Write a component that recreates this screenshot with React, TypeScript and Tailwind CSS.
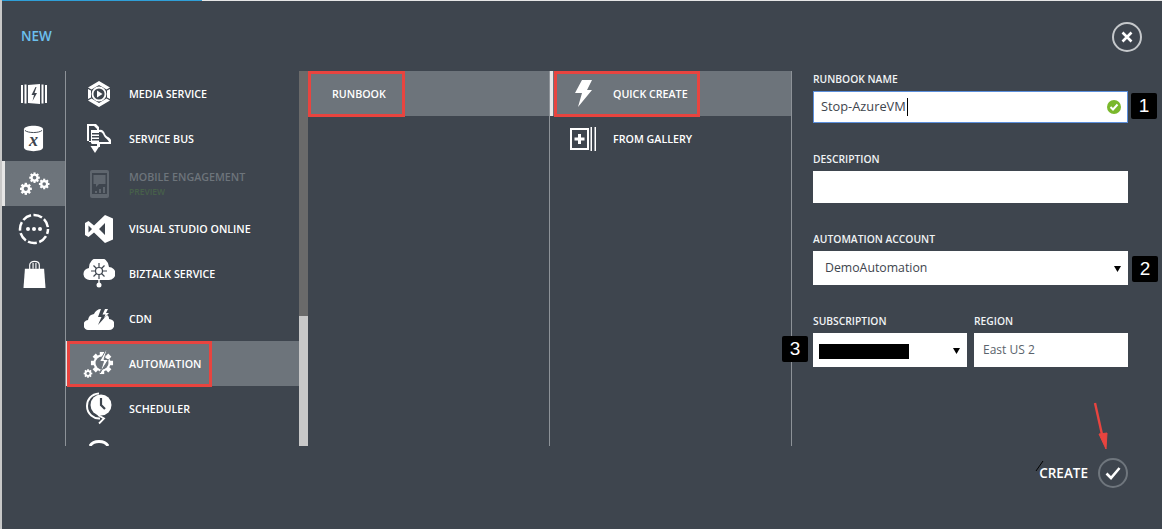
import type { ReactNode } from 'react'

const font = { fontFamily: '"Open Sans", "Liberation Sans", sans-serif' }

function Gear({ cx, cy, r, bg = '#3e454e' }: { cx: number; cy: number; r: number; bg?: string }) {
  const teeth = 8
  const points = Array.from({ length: teeth }, (_, i) => (i * 360) / teeth)
  return (
    <g fill="white">
      {points.map((a) => (
        <rect key={a} x={cx - r * 0.26} y={cy - r * 1.3} width={r * 0.52} height={r * 0.6} transform={`rotate(${a} ${cx} ${cy})`} />
      ))}
      <circle cx={cx} cy={cy} r={r} />
      <circle cx={cx} cy={cy} r={r * 0.45} fill={bg} />
    </g>
  )
}

const SitesIcon = () => (
  <svg width="26" height="20" viewBox="0 0 26 20" fill="white">
    <path d="M0 1h2v18H0zM3.500 .5h2v19h-2zM20.500 .5h2v19h-2zM24 1h2v18h-2zM7 1l12-1v20L7 19z" />
    <path d="M14.500 3l-4 8h2.500l-1.500 6 4.500-8h-2.500l2-6z" fill="#3e454e" />
  </svg>
)

const DataIcon = () => (
  <svg width="21" height="27" viewBox="0 0 22 27">
    <path d="M1 4c0-5 20-5 20 0v19c0 5-20 5-20 0z" fill="white" />
    <path d="M2 5c3 3 15 3 18 0" fill="none" stroke="#3e454e" strokeWidth="1" />
    <text x="11" y="21" textAnchor="middle" fontSize="19" fontWeight="700" fontStyle="italic" fontFamily="Liberation Serif, serif" fill="#3e454e">x</text>
  </svg>
)

const GearsIcon = () => (
  <svg width="30" height="25" viewBox="0 0 31 25" className="ml-[3px]">
    <Gear cx={6} cy={18} r={4.800} bg="#6d747b" />
    <Gear cx={15} cy={6.500} r={4.200} bg="#6d747b" />
    <Gear cx={25} cy={13} r={4.200} bg="#6d747b" />
  </svg>
)

const MoreIcon = () => (
  <svg width="32" height="32" viewBox="0 0 32 32" fill="white">
    <circle cx="16" cy="16" r="14" fill="none" stroke="white" strokeWidth="2.500" strokeDasharray="9 2.500" strokeDashoffset="4" />
    <circle cx="10" cy="16" r="2" />
    <circle cx="16" cy="16" r="2" />
    <circle cx="22" cy="16" r="2" />
  </svg>
)

const BagIcon = () => (
  <svg width="23" height="29" viewBox="0 0 24 30" className="mt-[1px] ml-[2px]">
    <path d="M2 9h20l1.500 20H.5z" fill="white" />
    <path d="M7 10V5c0-5 10-5 10 0v5M10.500 9V3M13.500 9V3" fill="none" stroke="white" strokeWidth="1.200" />
  </svg>
)

const MediaIcon = () => (
  <svg width="24" height="26" viewBox="0 0 24 26">
    <path d="M12 0l11 6.500-3.500 2L12 4 4.500 8.500 1 6.500zM1 19.500l3.500-2L12 22l7.500-4.500 3.500 2L12 26z" fill="white" />
    <path d="M1 8l3 1.500v7l-3 1.500zM23 8l-3 1.500v7l3 1.500z" fill="white" />
    <circle cx="12" cy="13" r="6.500" fill="none" stroke="white" strokeWidth="1.800" />
    <path d="M10 9.500l5.500 3.500-5.500 3.500z" fill="white" />
  </svg>
)

const BusIcon = () => (
  <svg width="24" height="29" viewBox="0 0 24 29">
    <path d="M0 0h9l3 3v3c3-1 5 1 6 4 1 3 5 3 6 6v4H13v3h-3v-3H4.500V18H2V17H0z" fill="white" />
    <path d="M2 2h5l3 3v12H2z" fill="#3e454e" />
    <path d="M12 8c3-.5 4 1.500 5 4 1 2.500 4 3 5 6H12z" fill="#3e454e" />
    <path d="M4 6v13h8V6z" fill="white" />
    <path d="M5 9h7v1.500H5zM5 12h7v1.500H5zM5 15h7v1.500H5z" fill="#3e454e" />
    <path d="M3.500 22h9L8 29z" fill="white" />
  </svg>
)

const PhoneIcon = () => (
  <svg width="19" height="28" viewBox="0 0 19 28" fill="#5f666e">
    <path d="M2 0h15a2 2 0 012 2v24a2 2 0 01-2 2H2a2 2 0 01-2-2V2a2 2 0 012-2z" />
    <path d="M2 3h15v21H2z" fill="#3e454e" />
    <path d="M3.500 5h12v9H9l-3 3v-3H3.500zM5 21h2v2H5zM9 19h2v4H9zM13 17h2v6h-2z" />
  </svg>
)

const VsIcon = () => (
  <svg width="28" height="28" viewBox="0 0 28 28" fill="white">
    <path d="M20 0l8 3.500v21L20 28 9 17.500 3.500 22 0 20V8l3.500-2L9 10.500zM20 8l-6 6 6 6zM3.500 10.500v7L7 14z" fillRule="evenodd" />
  </svg>
)

const BizTalkIcon = () => (
  <svg width="32" height="29" viewBox="0 0 32 29">
    <path d="M7 21a6 6 0 01-1-12 10 10 0 0120-1 6.500 6.500 0 010 13z" fill="white" />
    <g stroke="#3e454e" strokeWidth="1.200" fill="none">
      <circle cx="16" cy="12" r="3.500" />
      <path d="M16 4v4.500M16 15.500V20M8 12h4.500M19.500 12H24M10.500 6.500l3 3M21.500 6.500l-3 3M10.500 17.500l3-3M21.500 17.500l-3-3" />
    </g>
    <path d="M15.300 20h1.400v5h-1.400z" fill="white" />
    <circle cx="16" cy="26" r="2.500" fill="white" />
  </svg>
)

const CdnIcon = () => (
  <svg width="30" height="22" viewBox="0 0 30 22">
    <path d="M5 22a5 5 0 01-1-10 7 7 0 016-6c1-3 4-5 7-5l-3 8h3.500L14 17l9-10c2 1 2 3 2 4a5.500 5.500 0 010 11z" fill="white" />
    <path d="M21 1l-2.500 5.500h3L20 10l5-5h-3l2-4z" fill="white" />
  </svg>
)

const AutomationIcon = () => (
  <svg width="32" height="30" viewBox="0 0 32 30">
    <Gear cx={19} cy={14} r={8.500} bg="#6d747b" />
    <circle cx="19" cy="14" r="6.500" fill="#6d747b" />
    <path d="M23 1l-6.500 11.500h4L17 24l8.500-13.500h-4.500l3-9.500z" fill="white" stroke="#6d747b" strokeWidth="1" />
    <Gear cx={5} cy={24.500} r={3.300} bg="#6d747b" />
  </svg>
)

const SchedulerIcon = () => (
  <svg width="26" height="33" viewBox="0 0 26 33">
    <circle cx="15" cy="13" r="10.500" fill="white" />
    <path d="M15 6v7l4 4" fill="none" stroke="#3e454e" strokeWidth="2.200" />
    <path d="M13 1.500C5 2 1 8 1 14c0 8 7 13 13 12.500" fill="none" stroke="white" strokeWidth="2" />
    <path d="M12 23l6 3.500-5 5" fill="none" stroke="white" strokeWidth="1.800" />
  </svg>
)

const NextIcon = () => (
  <svg width="20" height="6" viewBox="0 0 20 6" className="mt-[9px]">
    <path d="M1 6c3-6 15-6 18 0" fill="none" stroke="white" strokeWidth="3" />
  </svg>
)

const BoltIcon = () => (
  <svg width="17" height="27" viewBox="0 0 17 27" fill="white">
    <path d="M7 0h10l-5 10h5L3 27l4-14H0z" />
  </svg>
)

const GalleryIcon = () => (
  <svg width="27" height="24" viewBox="0 0 27 24" fill="white">
    <path d="M0 1h19v22H0zM2 3v18h15V3z" fillRule="evenodd" />
    <path d="M8 7h3v3.500h3.500v3H11V17H8v-3.500H4.500v-3H8z" />
    <path d="M20.500 0h1.500v24h-1.500zM24.500 0H26v24h-1.500z" />
  </svg>
)

function NavItem({ selected, children }: { selected?: boolean; children: ReactNode }) {
  return (
    <div className={`flex h-[45px] items-center justify-center ${selected ? 'border-l-[3px] border-[#e6e6e6] bg-[#6d747b] pr-[3px]' : ''}`}>
      {children}
    </div>
  )
}

function ListRow({ icon, label, sub, muted, selected, boxClass, barClass }: { icon?: ReactNode; label: string; sub?: string; muted?: boolean; selected?: boolean; boxClass?: string; barClass?: string }) {
  return (
    <div className={`relative flex h-[45px] shrink-0 items-center ${selected ? 'bg-[#6d747b]' : ''}`}>
      {icon && <div className="flex w-[63px] shrink-0 justify-center pl-[3px]">{icon}</div>}
      <div className={icon ? '' : 'pl-[24px]'}>
        <div className={`text-[10.700px] leading-[14px] font-semibold whitespace-nowrap ${muted ? 'text-[#6d747b]' : 'text-white'}`}>{label}</div>
        {sub && <div className="mt-[3px] text-[8.500px] leading-[10px] font-semibold text-[#47604a]">{sub}</div>}
      </div>
      {barClass && <div className={`absolute top-0 left-0 h-[45px] w-[3px] ${barClass}`} />}
      {boxClass && <div className={`pointer-events-none absolute border-[3px] border-[#e8443f] ${boxClass}`} />}
    </div>
  )
}

function Label({ children }: { children: ReactNode }) {
  return <div className="mb-[5px] h-[14px] text-[10.300px] leading-[14px] font-semibold whitespace-nowrap text-[#f0f3f5]">{children}</div>
}

function Badge({ children, className }: { children: ReactNode; className: string }) {
  return (
    <div className={`absolute flex h-[26px] w-[26px] items-center justify-center rounded-[2px] bg-black text-[19px] text-white ${className}`} style={{ fontFamily: '"Liberation Sans", sans-serif' }}>
      {children}
    </div>
  )
}

const Caret = () => (
  <svg width="7" height="7" viewBox="0 0 7 7">
    <path d="M0 1h7L3.500 7z" fill="black" />
  </svg>
)

export default function App() {
  return (
    <div className="flex h-[529px] w-[1162px] flex-col overflow-hidden border-l-2 border-[#c8c8c8] bg-[#3e454e]" style={font}>
      <div className="flex h-px shrink-0 bg-[#e6e6e6]">
        <div className="w-[200px] bg-[#2f9fd8]" />
      </div>

      <div className="flex h-[70px] shrink-0 items-start justify-between pr-[20px] pl-[19px]">
        <div className="mt-[25px] text-[13.500px] leading-[20px] font-semibold text-[#6cc0ee]">NEW</div>
        <div className="mt-[21px] flex h-[30px] w-[30px] items-center justify-center rounded-full border-2 border-[#c5c8cb]">
          <svg width="12" height="12" viewBox="0 0 12 12">
            <path d="M1.500 1.500l9 9M10.500 1.500l-9 9" stroke="white" strokeWidth="2.600" />
          </svg>
        </div>
      </div>

      <div className="flex h-[375px] shrink-0">
        <div className="w-[63px] shrink-0">
          <NavItem><SitesIcon /></NavItem>
          <NavItem><DataIcon /></NavItem>
          <NavItem selected><GearsIcon /></NavItem>
          <NavItem><MoreIcon /></NavItem>
          <NavItem><BagIcon /></NavItem>
        </div>

        <div className="flex w-[243px] shrink-0 border-l border-[#8d9298]">
          <div className="flex w-[233px] flex-col overflow-hidden">
            <ListRow icon={<MediaIcon />} label="MEDIA SERVICE" />
            <ListRow icon={<BusIcon />} label="SERVICE BUS" />
            <ListRow icon={<PhoneIcon />} label="MOBILE ENGAGEMENT" sub="PREVIEW" muted />
            <ListRow icon={<VsIcon />} label="VISUAL STUDIO ONLINE" />
            <ListRow icon={<BizTalkIcon />} label="BIZTALK SERVICE" />
            <ListRow icon={<CdnIcon />} label="CDN" />
            <ListRow icon={<AutomationIcon />} label="AUTOMATION" selected barClass="bg-[#e6e6e6]" boxClass="left-[1px] top-0 h-[46px] w-[145px]" />
            <ListRow icon={<SchedulerIcon />} label="SCHEDULER" />
            <div className="flex h-[15px] w-[63px] shrink-0 justify-center overflow-hidden pl-[3px]"><NextIcon /></div>
          </div>
          <div className="flex w-[9px] shrink-0 flex-col">
            <div className="h-[245px] bg-[#6a6a6a]" />
            <div className="flex-1 bg-[#c8c8c8]" />
          </div>
        </div>

        <div className="w-[242px] shrink-0 border-r border-[#8d9298]">
          <ListRow label="RUNBOOK" selected boxClass="left-0 top-0 h-[46px] w-[97px]" />
        </div>

        <div className="w-[242px] shrink-0 border-r border-[#8d9298]">
          <ListRow icon={<BoltIcon />} label="QUICK CREATE" selected barClass="bg-[#e6e6e6]" boxClass="left-[4px] top-0 h-[46px] w-[146px]" />
          <ListRow icon={<GalleryIcon />} label="FROM GALLERY" />
        </div>

        <div className="relative ml-[21px] w-[315px] shrink-0 pt-[1px]">
          <Label>RUNBOOK NAME</Label>
          <div className="relative flex h-[32px] items-center border border-[#5b8fdc] bg-white pl-[7px] text-[12.800px] text-[#3e454e]">
            Stop-AzureVM
            <span className="ml-[1px] h-[18px] w-px bg-black" />
            <svg width="14" height="14" viewBox="0 0 14 14" className="absolute right-[6px]">
              <circle cx="7" cy="7" r="7" fill="#7ab82c" />
              <path d="M3.500 7l2.500 2.500 4.500-5" fill="none" stroke="white" strokeWidth="2" />
            </svg>
            <Badge className="top-[1px] left-[317px]">1</Badge>
          </div>

          <div className="mt-[29px]"><Label>DESCRIPTION</Label></div>
          <div className="h-[32px] bg-white" />

          <div className="mt-[29px]"><Label>AUTOMATION ACCOUNT</Label></div>
          <div className="relative flex h-[34px] items-center justify-between bg-white pt-[1px] pr-[7px] pl-[12px] text-[12.300px] text-[#3e454e]">
            DemoAutomation
            <Caret />
            <Badge className="top-[5px] left-[319px]">2</Badge>
          </div>

          <div className="mt-[29px] flex gap-[7px]">
            <div className="relative w-[154px]">
              <Label>SUBSCRIPTION</Label>
              <div className="relative flex h-[34px] items-center justify-between bg-white pr-[7px] pl-[6px]">
                <div className="mt-[2px] h-[15px] w-[90px] bg-black" />
                <Caret />
                <Badge className="top-[3px] left-[-31px]">3</Badge>
              </div>
            </div>
            <div className="w-[154px]">
              <Label>REGION</Label>
              <div className="flex h-[34px] items-center bg-white pl-[9px] text-[12px] text-[#5a636c]">East US 2</div>
            </div>
          </div>
        </div>
      </div>

      <div className="relative flex flex-1 items-start justify-end pr-[34px]">
        <div className="mt-[12px] flex items-center gap-[10px]">
          <span className="text-[13.500px] font-semibold text-white">CREATE</span>
          <div className="flex h-[30px] w-[30px] items-center justify-center rounded-full border-2 border-[#6f767d]">
            <svg width="16" height="14" viewBox="0 0 16 14">
              <path d="M1.500 7.500l4.500 4.500 8.500-10" fill="none" stroke="white" strokeWidth="2.600" />
            </svg>
          </div>
        </div>
        <svg width="30" height="60" viewBox="0 0 30 60" className="absolute top-[-50px] left-[1083px]">
          <path d="M10 7l8 36" stroke="#e8443f" strokeWidth="2.400" fill="none" />
          <path d="M14 38l8-1-1 16z" fill="#e8443f" stroke="#e8443f" strokeWidth="1" />
        </svg>
        <svg width="10" height="12" viewBox="0 0 10 12" className="absolute top-[14px] left-[1033px]">
          <path d="M8 1L1 11" stroke="#000" strokeWidth="1" />
        </svg>
      </div>
    </div>
  )
}
